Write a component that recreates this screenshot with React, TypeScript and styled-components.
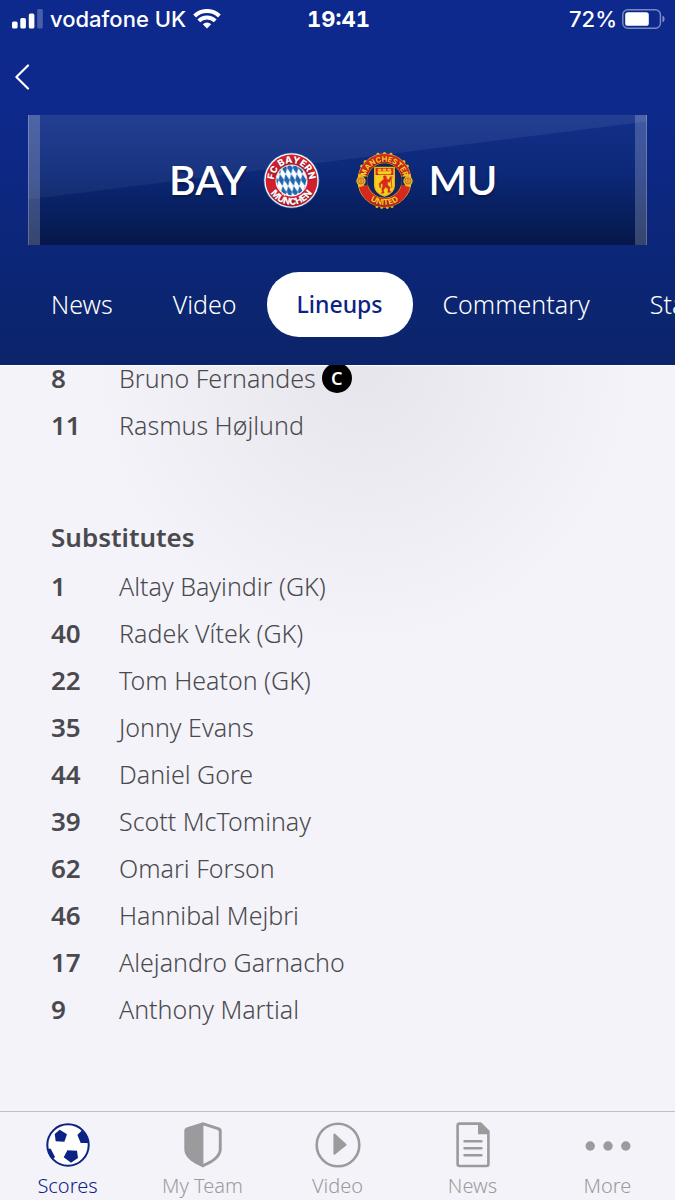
import React from "react";
import styled, { createGlobalStyle, css } from "styled-components";

const NAVY = "#0c2386";
const INK = "#4a4a4e";
const GREY = "#9b9b9e";
const TEXT_FONT = '"Noto Sans", "Open Sans", sans-serif';
const SYSTEM_FONT = 'Inter, "Liberation Sans", sans-serif';

const GlobalStyle = createGlobalStyle`
  *, *::before, *::after { box-sizing: border-box; }
  body { margin: 0; background: #f4f3f9; font-family: ${TEXT_FONT}; }
  button { font: inherit; color: inherit; border: 0; padding: 0; background: none; cursor: pointer; }
  a { color: inherit; text-decoration: none; }
`;

const Screen = styled.div`
  display: flex;
  flex-direction: column;
  height: 100vh;
  overflow: hidden;
`;

const Header = styled.header`
  flex: none;
  background: linear-gradient(#0d298d 0%, #0d298b 30%, #0b2469 100%);
  color: #fff;
`;

const StatusBar = styled.div`
  display: grid;
  grid-template-columns: 1fr auto 1fr;
  align-items: center;
  height: 38px;
  padding: 0 10px 0 12px;
  font: 500 22px/24px ${SYSTEM_FONT};
`;

const StatusGroup = styled.div<{ $end?: boolean }>`
  display: flex;
  align-items: center;
  gap: ${(p) => (p.$end ? 5 : 7)}px;
  justify-content: ${(p) => (p.$end ? "flex-end" : "flex-start")};
  white-space: nowrap;
  svg { display: block; }
`;

const Clock = styled.time`
  font-weight: 700;
  font-variant-numeric: tabular-nums;
`;

const BackButton = styled.button`
  display: flex;
  align-items: center;
  width: 56px;
  height: 77px;
  padding-left: 14px;
`;

const ScorePanel = styled.section`
  position: relative;
  display: grid;
  grid-template-columns: 1fr 1fr;
  gap: 36px;
  align-items: center;
  height: 130px;
  margin: 0 28px;
  background: linear-gradient(#12308a 0%, #0c2878 45%, #071e5a 80%, #061748 100%);
  border: solid rgba(255, 255, 255, 0.2);
  border-width: 0 12px;
  background-origin: border-box;

  &::before {
    content: "";
    position: absolute;
    inset: 0 -12px;
    background: linear-gradient(rgba(255, 255, 255, 0.07), rgba(255, 255, 255, 0.03));
    clip-path: polygon(0 0, 100% 0, 100% 5%, 0 65%);
  }
  &::after {
    content: "";
    position: absolute;
    inset: 0 -12px;
    border: solid rgba(255, 255, 255, 0.22);
    border-width: 0 1px;
  }
`;

const Team = styled.div<{ $home?: boolean }>`
  display: flex;
  flex-direction: ${(p) => (p.$home ? "row" : "row-reverse")};
  justify-content: flex-end;
  align-items: center;
  gap: 16px;
  z-index: 1;
  font: 600 41px/52px Lato, sans-serif;
  text-shadow: 0 2px 3px rgba(0, 0, 30, 0.4);
  svg { display: block; flex: none; }
`;

const Tabs = styled.nav`
  display: flex;
  align-items: center;
  padding: 27px 0 28px 21px;
  overflow: hidden;
`;

const Tab = styled.a<{ $active?: boolean }>`
  flex: none;
  padding: 0 30px;
  border-radius: 32px;
  font-size: 25px;
  line-height: 65px;
  font-weight: 300;
  ${(p) =>
    p.$active &&
    css`
      background: #fff;
      color: ${NAVY};
      font-size: 23px;
      font-weight: 500;
    `}
`;

const Content = styled.main`
  flex: 1;
  min-height: 0;
  overflow: hidden;
  padding: 0 51px;
  color: ${INK};
  background:
    radial-gradient(ellipse 270px 280px at 54% 0, rgba(90, 90, 100, 0.09), rgba(90, 90, 100, 0)),
    #f4f3f9;
  box-shadow: inset 0 1px 0 #fff;
`;

const PlayerTable = styled.table<{ $scrolled?: boolean }>`
  width: 100%;
  border-collapse: collapse;
  margin-top: ${(p) => (p.$scrolled ? -11 : 0)}px;
`;

const Caption = styled.caption`
  padding-top: 65px;
  text-align: left;
  font-size: 26px;
  line-height: 49px;
  font-weight: 600;
`;

const ShirtNumber = styled.th`
  width: 68px;
  height: 47px;
  padding: 0;
  text-align: left;
  font-size: 26px;
  line-height: 26px;
  font-weight: 600;
`;

const PlayerName = styled.td`
  height: 47px;
  padding: 0;
  font-size: 25px;
  line-height: 26px;
  font-weight: 300;
`;

const NameLine = styled.span`
  display: flex;
  align-items: center;
  gap: 6px;
`;

const CaptainBadge = styled.abbr`
  width: 30px;
  height: 30px;
  border-radius: 50%;
  background: #000;
  color: #fff;
  text-align: center;
  text-decoration: none;
  font-size: 18px;
  line-height: 30px;
  font-weight: 600;
`;

const BottomBar = styled.nav`
  flex: none;
  display: grid;
  grid-template-columns: repeat(5, 1fr);
  height: 89px;
  padding-top: 10px;
  border-top: 1px solid #c0c0c6;
  background: #f4f3f9;
`;

const BottomItem = styled.a<{ $active?: boolean }>`
  display: flex;
  flex-direction: column;
  align-items: center;
  gap: 5px;
  color: ${(p) => (p.$active ? NAVY : GREY)};
  font-size: 20px;
  line-height: 26px;
  font-weight: 300;
  svg { display: block; }
`;

const SignalIcon = () => (
  <svg width="31" height="20" viewBox="0 0 31 20" fill="#fff" aria-hidden="true">
    <rect x="0" y="12.5" width="5.6" height="7" rx="1.6" />
    <rect x="8.3" y="9" width="5.6" height="10.5" rx="1.6" />
    <rect x="16.8" y="4.5" width="5.6" height="15" rx="1.6" />
    <rect x="25.2" y="0" width="5.6" height="19.5" rx="1.6" opacity=".25" />
  </svg>
);

const WifiIcon = () => (
  <svg width="28" height="20" viewBox="0 0 28 20" fill="none" stroke="#fff" strokeWidth="4" aria-hidden="true">
    <path d="M1.6 7a17.8 17.8 0 0 1 24.8 0" />
    <path d="M5.8 11.8a11.6 11.6 0 0 1 16.4 0" />
    <path d="M9.8 15.2a6 6 0 0 1 8.4 0L14 19.6z" fill="#fff" stroke="none" />
  </svg>
);

const BatteryIcon = () => (
  <svg width="43" height="20" viewBox="0 0 43 20" aria-hidden="true">
    <rect x=".8" y=".8" width="37.6" height="18.4" rx="5" fill="none" stroke="#fff" strokeOpacity=".45" strokeWidth="1.5" />
    <rect x="3.2" y="3.2" width="23.6" height="13.6" rx="2.6" fill="#fff" />
    <path d="M40.5 6.8c2.8 1 2.8 5.4 0 6.4z" fill="#fff" fillOpacity=".5" />
  </svg>
);

const BayernCrest = () => (
  <svg width="57" height="57" viewBox="0 0 57 57" role="img" aria-label="Bayern Munich">
    <defs>
      <pattern id="lozenge" width="5.6" height="12" patternUnits="userSpaceOnUse" patternTransform="translate(25.4 22) skewX(12)">
        <rect width="5.6" height="12" fill="#fff" />
        <path d="M2.8 0 5.6 6 2.8 12 0 6z" fill="#1f66b0" />
      </pattern>
      <path id="bayernTop" d="M13.5 37.8A17.6 17.6 0 1 1 43.5 37.8" />
      <path id="bayernBottom" d="M4.2 28.5A24.3 24.3 0 0 0 52.8 28.5" />
    </defs>
    <circle cx="28.5" cy="28.5" r="28" fill="#1d5fa8" />
    <circle cx="28.5" cy="28.5" r="27.2" fill="#fff" />
    <circle cx="28.5" cy="28.5" r="25.9" fill="#d2202f" />
    <circle cx="28.5" cy="28.5" r="16" fill="#fff" />
    <circle cx="28.5" cy="28.5" r="15" fill="url(#lozenge)" />
    <g fill="#fff" fontFamily="Inter, sans-serif" fontWeight="800" fontSize="9.4" textAnchor="middle">
      <text><textPath href="#bayernTop" startOffset="50%">FC BAYERN</textPath></text>
      <text><textPath href="#bayernBottom" startOffset="50%">MÜNCHEN</textPath></text>
    </g>
  </svg>
);

const UnitedCrest = () => (
  <svg width="57" height="57" viewBox="0 0 57 57" role="img" aria-label="Manchester United">
    <defs>
      <path id="unitedTop" d="M9.2 31A19.4 19.4 0 1 1 47.8 31" />
      <path id="unitedBottom" d="M4 28.5A24.5 24.5 0 0 0 53 28.5" />
    </defs>
    <g fill="#e8b923">
      {[-58, -46, -14, 0, 14, 46, 58].map((a) => (
        <circle key={a} cx="28.5" cy="1.6" r="1.6" transform={`rotate(${a} 28.5 28.5)`} />
      ))}
      {[164, 174, 186, 196].map((a) => (
        <circle key={a} cx="28.5" cy="1.4" r="1.5" transform={`rotate(${a} 28.5 28.5)`} />
      ))}
    </g>
    <circle cx="28.5" cy="28.5" r="22" fill="none" stroke="#e8b923" strokeWidth="10" />
    <circle cx="28.5" cy="28.5" r="17" fill="#13245f" />
    <g fill="none" stroke="#d5291f" strokeWidth="8.8">
      <path d="M7.2 22.8A22 22 0 0 1 49.8 22.8" />
      <path d="M7.2 34.2A22 22 0 0 0 49.8 34.2" />
    </g>
    <path d="M9.6 24.5v9M47.4 24.5v9" fill="none" stroke="#13245f" strokeWidth="4" />
    {[5, 52].map((x) => (
      <g key={x}>
        <circle cx={x} cy="29" r="4.7" fill="#e8b923" />
        <circle cx={x} cy="29" r="3" fill="#efc53a" stroke="#c5561d" strokeWidth=".8" />
        <path d={`M${x - 2} 28h4M${x - 2} 30h4M${x} 26.5v5`} stroke="#c5561d" strokeWidth=".6" />
      </g>
    ))}
    <g transform="translate(3.4 0) scale(.88 1)">
      <path d="M17.3 15.5H39.7V33.5C39.7 39 34 42.5 28.5 44 23 42.5 17.3 39 17.3 33.5z" fill="#f6d21f" stroke="#e8b923" strokeWidth="1.4" />
      <path d="M18.4 16h20.2v7H18.4z" fill="#d5291f" />
      <path d="M20 19.2h17l-1.6 3H21.6zM21 16.8h4v2h-4zM26.5 16.8h4v2h-4zM32 16.8h4v2h-4z" fill="#f6d21f" />
      <path d="M27.2 24.5l1.8-1 1.8 1.3-.4 1.8 3 1.4 1.8-2.6 1 .6-1.8 4.2-2.6-.4.2 3.4 2.8 2-.6 3.6 1.6 1.2-3.4.4.2-3.8-3.2-1.6-2.2 3.2.8 2.8-3.2.2 1.2-1.4-.6-2.6 1.4-3.4-.8-2.8-2.2 1.8.6 2.8-1.2-.2-.8-3.6 3.8-3.6 1.8-.6z" fill="#d5291f" stroke="#d5291f" strokeWidth=".6" />
      <path d="M36 24.5 36.8 36M35 24.5v2.4M37 24v2.6" stroke="#d5291f" strokeWidth=".8" />
    </g>
    <g fill="#f8d42a" fontFamily="Inter, sans-serif" fontWeight="700" textAnchor="middle">
      <text fontSize="7.4"><textPath href="#unitedTop" startOffset="50%">MANCHESTER</textPath></text>
      <text fontSize="8"><textPath href="#unitedBottom" startOffset="50%">UNITED</textPath></text>
    </g>
  </svg>
);

const iconProps = { width: 46, height: 46, viewBox: "0 0 46 46", "aria-hidden": true } as const;

const FootballIcon = () => (
  <svg {...iconProps} fill="currentColor">
    <circle cx="23" cy="23" r="20.7" fill="#fff" stroke="currentColor" strokeWidth="2" />
    <path d="M14.7 7.7 22 12.3 19.4 19.7 10.7 19.3 9.7 12z" />
    <path d="M22.4 28.3 32 28.7 33 36 26 40.7 18.7 35.3z" />
    <path d="M32.4 12.9 37 8.3 40.5 12 43.4 18 43.5 21 35.7 21z" />
    <path d="M2.4 26.7 5.7 26.7 10 35 7.6 37.5 4 32z" />
  </svg>
);

const ShieldIcon = () => (
  <svg {...iconProps} fill="currentColor">
    <path fillRule="evenodd" d="M23 .3 39.4 5.4Q41.7 6.2 41.7 8.6V27C41.7 37 30 42 23 45.4 16 42 4.3 37 4.3 27V8.6Q4.3 6.2 6.6 5.4zM23.4 3.6V41.8C30 39 38.8 34.6 38.8 27V10Q38.8 8.2 37 7.7z" />
  </svg>
);

const PlayIcon = () => (
  <svg {...iconProps} fill="currentColor">
    <circle cx="23" cy="23" r="21.3" fill="none" stroke="currentColor" strokeWidth="2.6" />
    <path d="M19.4 12.6 30.6 22.7 19.4 31.8z" stroke="currentColor" strokeWidth="2" strokeLinejoin="round" />
  </svg>
);

const ArticleIcon = () => (
  <svg {...iconProps} fill="none" stroke="currentColor" strokeWidth="2.6">
    <path d="M9.6 1.6H30.6L38.4 9.4V42Q38.4 44 36.4 44H9.6Q7.6 44 7.6 42V3.6Q7.6 1.6 9.6 1.6z" strokeLinejoin="round" />
    <path d="M28 1V12.2H39V9L31 1z" fill="currentColor" stroke="none" />
    <path d="M14.6 19.3H31.4M14.6 26.3H31.4M14.6 33.2H31.4" strokeLinecap="round" />
  </svg>
);

const MoreIcon = () => (
  <svg {...iconProps} fill="currentColor">
    <circle cx="5.2" cy="24" r="4.7" />
    <circle cx="23" cy="24" r="4.7" />
    <circle cx="40.8" cy="24" r="4.7" />
  </svg>
);

type Player = { number: number; name: string; captain?: boolean };

const starters: Player[] = [
  { number: 8, name: "Bruno Fernandes", captain: true },
  { number: 11, name: "Rasmus Højlund" },
];

const substitutes: Player[] = [
  { number: 1, name: "Altay Bayindir (GK)" },
  { number: 40, name: "Radek Vítek (GK)" },
  { number: 22, name: "Tom Heaton (GK)" },
  { number: 35, name: "Jonny Evans" },
  { number: 44, name: "Daniel Gore" },
  { number: 39, name: "Scott McTominay" },
  { number: 62, name: "Omari Forson" },
  { number: 46, name: "Hannibal Mejbri" },
  { number: 17, name: "Alejandro Garnacho" },
  { number: 9, name: "Anthony Martial" },
];

const sections = ["News", "Video", "Lineups", "Commentary", "Stats"];

const destinations = [
  { label: "Scores", Icon: FootballIcon },
  { label: "My Team", Icon: ShieldIcon },
  { label: "Video", Icon: PlayIcon },
  { label: "News", Icon: ArticleIcon },
  { label: "More", Icon: MoreIcon },
];

const PlayerRows = ({ players }: { players: Player[] }) => (
  <tbody>
    {players.map((p) => (
      <tr key={p.number}>
        <ShirtNumber scope="row">{p.number}</ShirtNumber>
        <PlayerName>
          <NameLine>
            {p.name}
            {p.captain && <CaptainBadge title="Captain">C</CaptainBadge>}
          </NameLine>
        </PlayerName>
      </tr>
    ))}
  </tbody>
);

export default function App() {
  return (
    <Screen>
      <GlobalStyle />
      <Header>
        <StatusBar>
          <StatusGroup>
            <SignalIcon />
            vodafone UK
            <WifiIcon />
          </StatusGroup>
          <Clock>19:41</Clock>
          <StatusGroup $end>
            72%
            <BatteryIcon />
          </StatusGroup>
        </StatusBar>
        <BackButton aria-label="Back">
          <svg width="16" height="26" viewBox="0 0 16 26" fill="none" stroke="#fff" strokeWidth="2.2" strokeLinecap="round" strokeLinejoin="round" aria-hidden="true">
            <path d="M14 1.5 2.4 13 14 24.5" />
          </svg>
        </BackButton>
        <ScorePanel>
          <Team $home>
            BAY
            <BayernCrest />
          </Team>
          <Team>
            MU
            <UnitedCrest />
          </Team>
        </ScorePanel>
        <Tabs>
          {sections.map((s) => (
            <Tab key={s} href="#" $active={s === "Lineups"}>
              {s}
            </Tab>
          ))}
        </Tabs>
      </Header>
      <Content>
        <PlayerTable $scrolled>
          <PlayerRows players={starters} />
        </PlayerTable>
        <PlayerTable>
          <Caption>Substitutes</Caption>
          <PlayerRows players={substitutes} />
        </PlayerTable>
      </Content>
      <BottomBar>
        {destinations.map(({ label, Icon }) => (
          <BottomItem key={label} href="#" $active={label === "Scores"}>
            <Icon />
            {label}
          </BottomItem>
        ))}
      </BottomBar>
    </Screen>
  );
}
